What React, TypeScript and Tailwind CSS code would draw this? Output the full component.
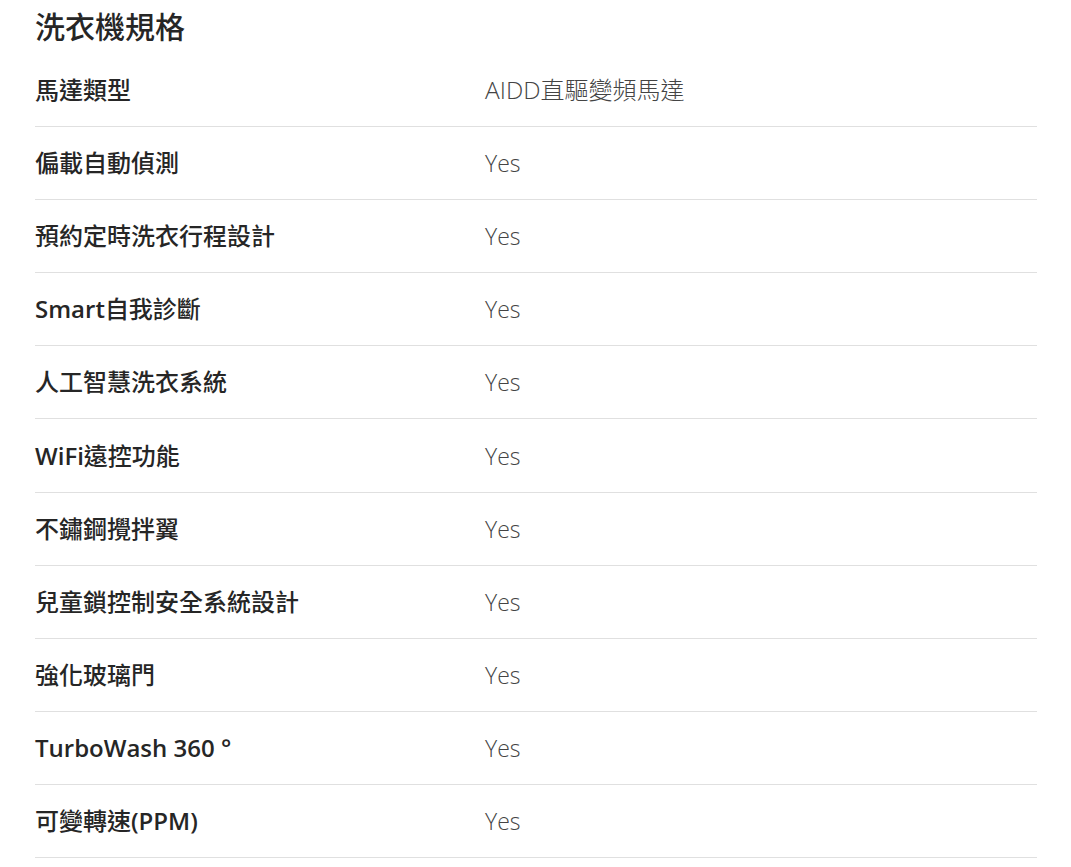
import React from "react";

const rows: [string, string][] = [
  ["馬達類型", "AIDD直驅變頻馬達"],
  ["偏載自動偵測", "Yes"],
  ["預約定時洗衣行程設計", "Yes"],
  ["Smart自我診斷", "Yes"],
  ["人工智慧洗衣系統", "Yes"],
  ["WiFi遠控功能", "Yes"],
  ["不鏽鋼攪拌翼", "Yes"],
  ["兒童鎖控制安全系統設計", "Yes"],
  ["強化玻璃門", "Yes"],
  ["TurboWash 360 °", "Yes"],
  ["可變轉速(PPM)", "Yes"],
];

function split(s: string) {
  return s.match(/[\x00-\x7F°]+|[^\x00-\x7F°]+/g) || [];
}

function isLatin(p: string) {
  return /^[\x00-\x7F°]+$/.test(p);
}

function Label({ text }: { text: string }) {
  return (
    <>
      {split(text).map((p, i) =>
        isLatin(p) ? (
          <span key={i} className="font-semibold">
            {p}
          </span>
        ) : (
          <span key={i} className="font-medium">
            {p}
          </span>
        )
      )}
    </>
  );
}

function Value({ text }: { text: string }) {
  return (
    <>
      {split(text).map((p, i) =>
        isLatin(p) ? (
          <span
            key={i}
            className={p === "Yes" ? "text-[23px] font-light" : "text-[24.5px] font-light"}
          >
            {p}
          </span>
        ) : (
          <span key={i} className="font-light">
            {p}
          </span>
        )
      )}
    </>
  );
}

export default function App() {
  return (
    <div
      className="w-[1071px] h-[867px] bg-white overflow-hidden"
      style={{ fontFamily: '"Open Sans", "Noto Sans CJK TC", sans-serif' }}
    >
      <div className="pl-[35px] pr-[34px]">
        <h1 className="text-[30px] leading-[54px] font-medium text-[#262626]">
          洗衣機規格
        </h1>
        {rows.map(([k, v], i) => (
          <div
            key={i}
            className="flex items-center h-[73.1px] border-b border-[#e0e0e0]"
          >
            <div className="w-[450px] text-[24px] leading-[32px] text-[#262626]">
              <Label text={k} />
            </div>
            <div className="text-[24px] leading-[32px] text-[#444]">
              <Value text={v} />
            </div>
          </div>
        ))}
      </div>
    </div>
  );
}
